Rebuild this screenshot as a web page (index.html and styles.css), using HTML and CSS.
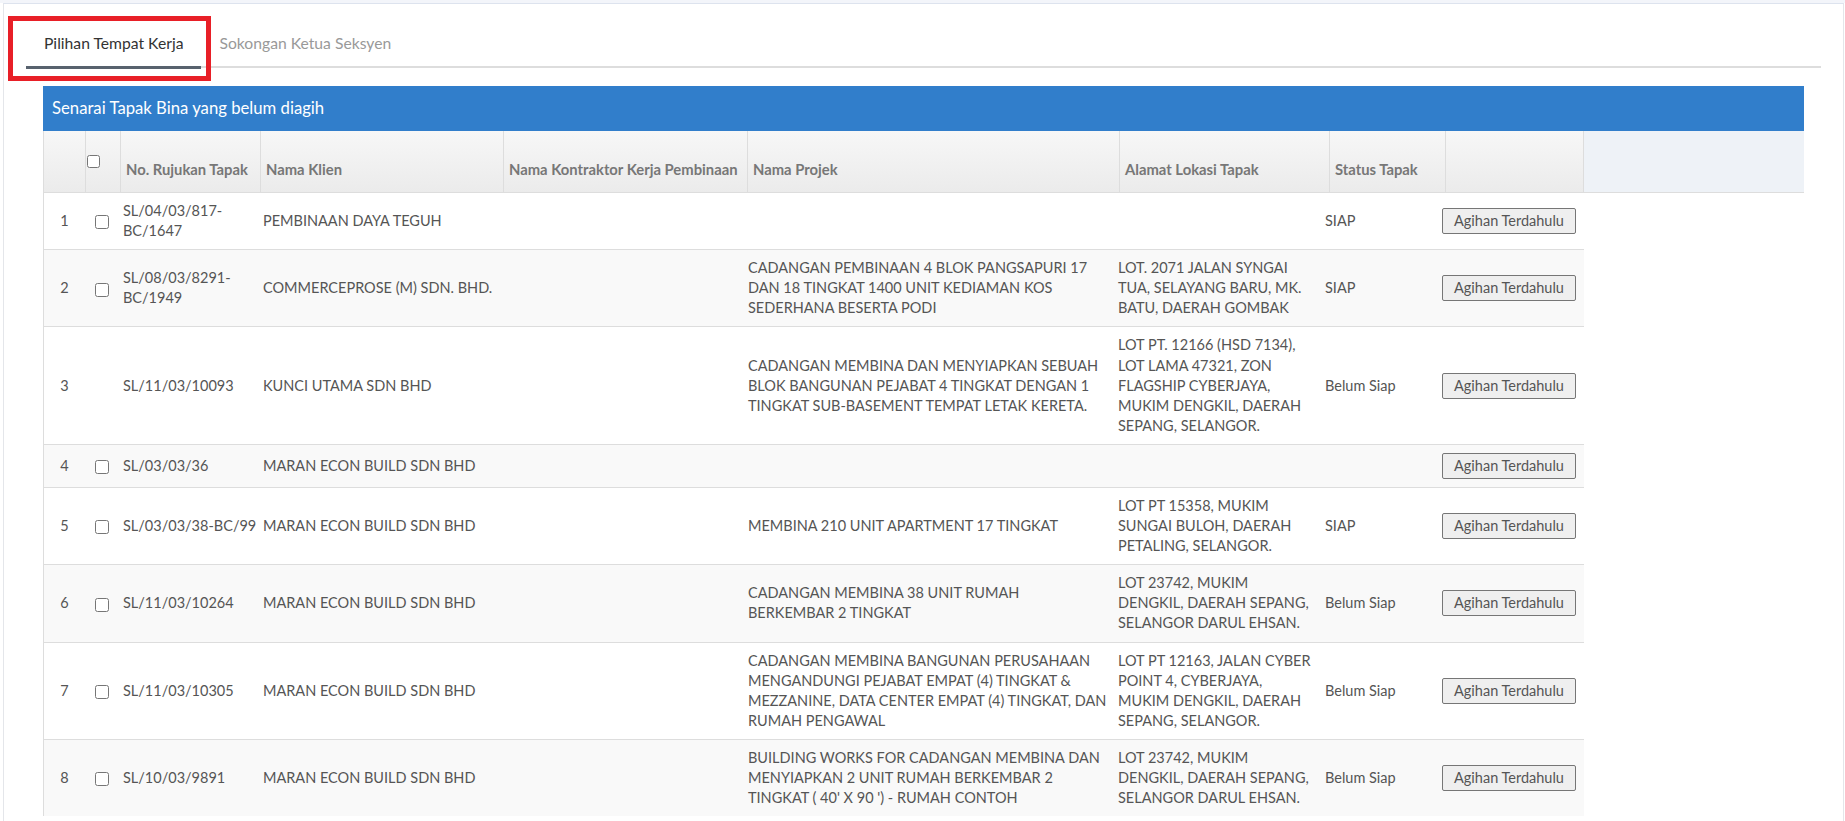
FILE: index.html
```html
<!DOCTYPE html>
<html lang="ms">
<head>
  <meta charset="UTF-8" />
  <meta name="viewport" content="width=device-width, initial-scale=1.0" />
  <title>Agihan Tapak Bina</title>
  <link rel="stylesheet" href="styles.css">
</head>
<body>
  <div class="topbar"></div>

  <div class="page">
    <ul class="tabs">
      <li class="tab active">Pilihan Tempat Kerja</li>
      <li class="tab">Sokongan Ketua Seksyen</li>
    </ul>
    <span class="mark"></span>

    <div class="tab-content">
      <div class="panel">
        <div class="panel-heading">Senarai Tapak Bina yang belum diagih</div>

        <div class="scroll-head">
          <table class="grid grid-head">
            <colgroup>
              <col style="width:42px"><col style="width:35px"><col style="width:140px">
              <col style="width:243px"><col style="width:244px"><col style="width:372px">
              <col style="width:210px"><col style="width:116px"><col style="width:139px">
            </colgroup>
            <thead>
              <tr>
                <th></th>
                <th class="check"><input type="checkbox" class="cb-all"></th>
                <th>No. Rujukan Tapak</th>
                <th>Nama Klien</th>
                <th>Nama Kontraktor Kerja Pembinaan</th>
                <th>Nama Projek</th>
                <th>Alamat Lokasi Tapak</th>
                <th>Status Tapak</th>
                <th class="last"></th>
              </tr>
            </thead>
          </table>
        </div>

        <div class="scroll-body">
          <table class="grid grid-body">
            <colgroup>
              <col style="width:42px"><col style="width:33px"><col style="width:140px">
              <col style="width:241px"><col style="width:244px"><col style="width:370px">
              <col style="width:207px"><col style="width:117px"><col style="width:147px">
            </colgroup>
            <tbody>
              <tr>
                <td>1</td>
                <td class="check"><input type="checkbox"></td>
                <td class="ref">SL/04/03/817-BC/1647</td>
                <td>PEMBINAAN DAYA TEGUH</td>
                <td></td>
                <td class="projek"></td>
                <td class="alamat"></td>
                <td>SIAP</td>
                <td><button class="btn-agih">Agihan Terdahulu</button></td>
              </tr>
              <tr>
                <td>2</td>
                <td class="check"><input type="checkbox"></td>
                <td class="ref">SL/08/03/8291-BC/1949</td>
                <td>COMMERCEPROSE (M) SDN. BHD.</td>
                <td></td>
                <td class="projek">CADANGAN PEMBINAAN 4 BLOK PANGSAPURI 17 DAN 18 TINGKAT 1400 UNIT KEDIAMAN KOS SEDERHANA BESERTA PODI</td>
                <td class="alamat">LOT. 2071 JALAN SYNGAI TUA, SELAYANG BARU, MK. BATU, DAERAH GOMBAK</td>
                <td>SIAP</td>
                <td><button class="btn-agih">Agihan Terdahulu</button></td>
              </tr>
              <tr>
                <td>3</td>
                <td class="check"></td>
                <td class="ref">SL/11/03/10093</td>
                <td>KUNCI UTAMA SDN BHD</td>
                <td></td>
                <td class="projek">CADANGAN MEMBINA DAN MENYIAPKAN SEBUAH BLOK BANGUNAN PEJABAT 4 TINGKAT DENGAN 1 TINGKAT SUB-BASEMENT TEMPAT LETAK KERETA.</td>
                <td class="alamat">LOT PT. 12166 (HSD 7134), LOT LAMA 47321, ZON FLAGSHIP CYBERJAYA, MUKIM DENGKIL, DAERAH SEPANG, SELANGOR.</td>
                <td>Belum Siap</td>
                <td><button class="btn-agih">Agihan Terdahulu</button></td>
              </tr>
              <tr>
                <td>4</td>
                <td class="check"><input type="checkbox"></td>
                <td class="ref">SL/03/03/36</td>
                <td>MARAN ECON BUILD SDN BHD</td>
                <td></td>
                <td class="projek"></td>
                <td class="alamat"></td>
                <td></td>
                <td><button class="btn-agih">Agihan Terdahulu</button></td>
              </tr>
              <tr>
                <td>5</td>
                <td class="check"><input type="checkbox"></td>
                <td class="ref">SL/03/03/38-BC/99</td>
                <td>MARAN ECON BUILD SDN BHD</td>
                <td></td>
                <td class="projek">MEMBINA 210 UNIT APARTMENT 17 TINGKAT</td>
                <td class="alamat">LOT PT 15358, MUKIM SUNGAI BULOH, DAERAH PETALING, SELANGOR.</td>
                <td>SIAP</td>
                <td><button class="btn-agih">Agihan Terdahulu</button></td>
              </tr>
              <tr>
                <td>6</td>
                <td class="check"><input type="checkbox"></td>
                <td class="ref">SL/11/03/10264</td>
                <td>MARAN ECON BUILD SDN BHD</td>
                <td></td>
                <td class="projek">CADANGAN MEMBINA 38 UNIT RUMAH BERKEMBAR 2 TINGKAT</td>
                <td class="alamat">LOT 23742, MUKIM DENGKIL, DAERAH SEPANG, SELANGOR DARUL EHSAN.</td>
                <td>Belum Siap</td>
                <td><button class="btn-agih">Agihan Terdahulu</button></td>
              </tr>
              <tr>
                <td>7</td>
                <td class="check"><input type="checkbox"></td>
                <td class="ref">SL/11/03/10305</td>
                <td>MARAN ECON BUILD SDN BHD</td>
                <td></td>
                <td class="projek">CADANGAN MEMBINA BANGUNAN PERUSAHAAN MENGANDUNGI PEJABAT EMPAT (4) TINGKAT &amp; MEZZANINE, DATA CENTER EMPAT (4) TINGKAT, DAN RUMAH PENGAWAL</td>
                <td class="alamat">LOT PT 12163, JALAN CYBER POINT 4, CYBERJAYA, MUKIM DENGKIL, DAERAH SEPANG, SELANGOR.</td>
                <td>Belum Siap</td>
                <td><button class="btn-agih">Agihan Terdahulu</button></td>
              </tr>
              <tr>
                <td>8</td>
                <td class="check"><input type="checkbox"></td>
                <td class="ref">SL/10/03/9891</td>
                <td>MARAN ECON BUILD SDN BHD</td>
                <td></td>
                <td class="projek">BUILDING WORKS FOR CADANGAN MEMBINA DAN MENYIAPKAN 2 UNIT RUMAH BERKEMBAR 2 TINGKAT ( 40' X 90 ') - RUMAH CONTOH</td>
                <td class="alamat">LOT 23742, MUKIM DENGKIL, DAERAH SEPANG, SELANGOR DARUL EHSAN.</td>
                <td>Belum Siap</td>
                <td><button class="btn-agih">Agihan Terdahulu</button></td>
              </tr>
            </tbody>
          </table>
        </div>
      </div>
    </div>
  </div>
</body>
</html>
```

FILE: styles.css
```css
body {
  margin: 0;
  font-family: Lato, "Open Sans", sans-serif;
  font-size: 14.5px;
  line-height: 20.1px;
  color: #555;
  background: #fff;
}

.topbar {
  height: 3px;
  background: #f3f5fa;
}

.page {
  position: relative;
  min-height: 820px;
  margin: 0 1px 0 3px;
  padding: 22px 22px 0;
  border: 1px solid #e4e6ea;
  border-top-color: #dde3ee;
}

/* tabs */
.tabs {
  display: flex;
  margin: 0;
  padding: 0;
  list-style: none;
  border-bottom: 2px solid #ddd;
}

.tab {
  padding: 7px 18px 13px;
  margin-bottom: -3px;
  border-bottom: 3px solid transparent;
  font-size: 15.7px;
  line-height: 20px;
  color: #999;
}

.tab.active {
  color: #333;
  border-bottom-color: #58626e;
}

/* highlight drawn over the active tab */
.mark {
  position: absolute;
  left: 4px;
  top: 12px;
  width: 203px;
  height: 65px;
  box-sizing: border-box;
  border: 5px solid #e81f27;
}

.tab-content {
  padding: 18px 17px 0;
}

/* panel */
.panel-heading {
  padding: 12px 9px;
  background: #317ecb;
  color: #fff;
  font-size: 16.7px;
  line-height: 21px;
}

.scroll-head {
  background: #eef2f7;
  border-bottom: 1px solid #ddd;
}

.grid {
  width: 1541px;
  table-layout: fixed;
  border-collapse: separate;
  border-spacing: 0;
}

.grid-head th {
  padding: 28px 5px 13px;
  text-align: left;
  font-size: 14.8px;
  line-height: 20px;
  font-weight: 700;
  color: #777;
  white-space: nowrap;
  background: linear-gradient(#f7f7f7, #ebebeb);
  border-left: 1px solid #ddd;
}

.grid-head th.check {
  padding: 0 0 0 1px;
  vertical-align: middle;
}

.grid-head th.last {
  border-right: 1px solid #ddd;
}

.cb-all {
  display: block;
  width: 13px;
  height: 13px;
  margin: 0;
}

.grid-body td {
  padding: 8px 5px;
  vertical-align: middle;
  border-top: 1px solid #ddd;
}

.grid-body tr:first-child td {
  border-top: 0;
}

.grid-body tr:nth-child(even) td {
  background: #f9f9f9;
}

.grid-body td:first-child {
  text-align: center;
  border-left: 1px solid #ddd;
}

.grid-body td.check {
  padding: 0;
  text-align: center;
}

.grid-body td.check input {
  width: 14px;
  height: 14px;
  margin: 0;
  vertical-align: middle;
}

.grid-body td.ref {
  padding-right: 0;
}

.grid-body td.projek {
  padding-right: 4px;
}

.grid-body td.alamat {
  padding-right: 7px;
}

.btn-agih {
  display: block;
  height: 26px;
  padding: 0 11px;
  font-family: inherit;
  font-size: 14.5px;
  line-height: 24px;
  color: #555;
  background: #efefef;
  border: 1px solid #767676;
  border-radius: 2px;
}
```
